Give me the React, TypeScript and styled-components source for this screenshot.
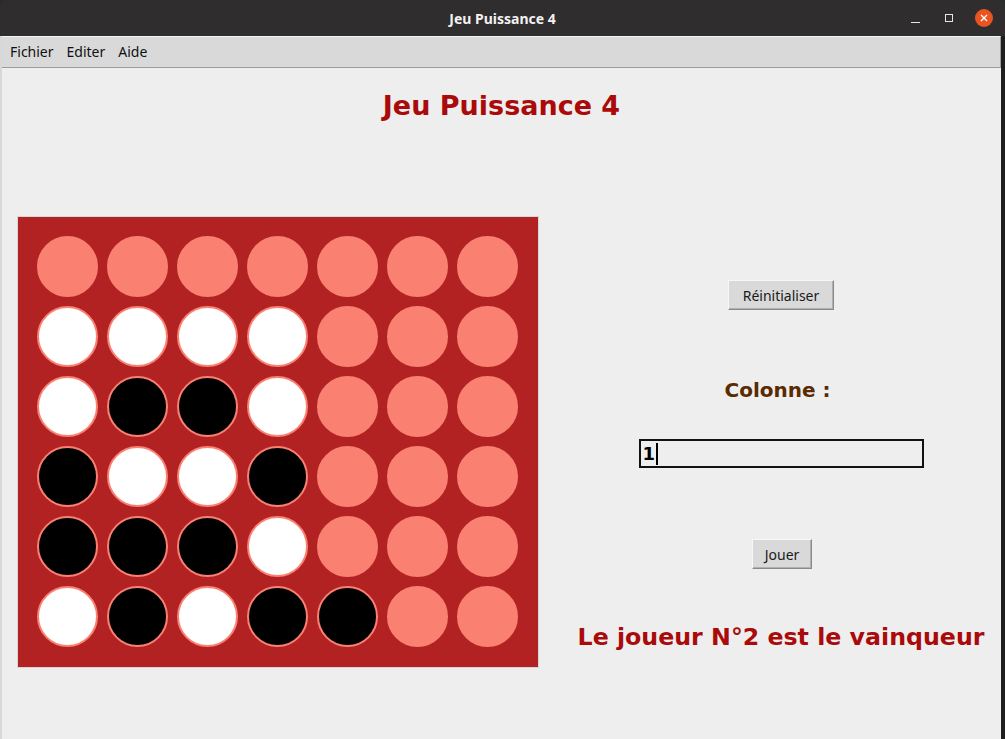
// @ts-nocheck
import React from "react"
import styled, { createGlobalStyle } from "styled-components"

const GlobalStyle = createGlobalStyle`
  html, body {
    margin: 0;
    padding: 0;
    background: #2b2b2b;
  }
  #root {
    width: 1005px;
    height: 739px;
    overflow: hidden;
  }
`

// 6 rangées x 7 colonnes : p = libre, w = joueur 1, b = joueur 2
const board = [
  "ppppppp",
  "wwwwppp",
  "wbbwppp",
  "bwwbppp",
  "bbbwppp",
  "wbwbbpp"
]

const Screen = styled.div`
  display: flex;
  flex-direction: column;
  width: 1005px;
  height: 739px;
`

const TitleBar = styled.div`
  position: relative;
  height: 36px;
  flex-shrink: 0;
  background: #2f2d2d;
  border-radius: 8px 8px 0 0;
  display: flex;
  align-items: center;
  justify-content: center;
  color: #f2f2f2;
  font-family: "Noto Sans", "DejaVu Sans", sans-serif;
  font-weight: 700;
  font-size: 14px;
`

const WindowControls = styled.div`
  position: absolute;
  right: 12px;
  top: 0;
  height: 36px;
  display: flex;
  align-items: center;
  gap: 18px;
`

const Minimize = styled.div`
  width: 9px;
  height: 1px;
  margin-top: 8px;
  margin-right: 7px;
  background: #e6e6e6;
`

const Maximize = styled.div`
  width: 6px;
  height: 6px;
  border: 1px solid #e6e6e6;
  margin-right: 4px;
`

const CloseButton = styled.div`
  width: 18px;
  height: 18px;
  border-radius: 50%;
  background: #e95420;
  display: flex;
  align-items: center;
  justify-content: center;
`

const Body = styled.div`
  flex: 1;
  display: flex;
`

const LeftEdge = styled.div`
  width: 2px;
  background: #d8d8d8;
`

const RightEdge = styled.div`
  width: 4px;
  background: #1e1e1e;
`

const Window = styled.div`
  flex: 1;
  display: flex;
  flex-direction: column;
  background: #eeeeee;
`

const MenuBar = styled.div`
  height: 30px;
  display: flex;
  align-items: center;
  gap: 13px;
  padding-left: 8px;
  background: #d9d9d9;
  border-top: 1px solid #f4f4f4;
  border-bottom: 1px solid #9c9c9c;
  border-right: 1px solid #9c9c9c;
  font-family: "Noto Sans", "DejaVu Sans", sans-serif;
  font-size: 14px;
  color: #111;
`

const MenuItem = styled.span`
  line-height: 30px;
`

const Heading = styled.h1`
  margin: 22px 0 0;
  text-align: center;
  font-family: "DejaVu Sans", sans-serif;
  font-weight: 700;
  font-size: 27px;
  line-height: 32px;
  color: #aa0a0a;
`

const Content = styled.div`
  display: flex;
  margin-top: 94px;
  padding-left: 15px;
`

const Canvas = styled.div`
  box-sizing: content-box;
  width: 501px;
  height: 431px;
  padding: 19px 0 0 19px;
  border: 1px solid #d6d6d6;
  background: #b22222;
  display: grid;
  grid-template-columns: repeat(7, 61px);
  grid-template-rows: repeat(6, 61px);
  gap: 9px;
  align-content: start;
`

const fills = { p: "#fa8072", w: "#ffffff", b: "#000000" }

const Disc = styled.div`
  width: 61px;
  height: 61px;
  box-sizing: border-box;
  border-radius: 50%;
  background: ${(p) => fills[p.$kind]};
  border: 2px solid #fa8072;
`

const Panel = styled.div`
  width: 440px;
  margin-left: 22px;
  display: flex;
  flex-direction: column;
  align-items: center;
`

const TkButton = styled.button`
  height: 30px;
  padding: 0 ${(p) => p.$pad}px;
  margin-top: ${(p) => p.$top}px;
  margin-left: ${(p) => p.$shift || 0}px;
  background: #d9d9d9;
  border: 1px solid;
  border-color: #f7f7f7 #8a8a8a #8a8a8a #f7f7f7;
  box-shadow: inset -1px -1px 0 #b0b0b0;
  font-family: "Noto Sans", "DejaVu Sans", sans-serif;
  font-size: 14px;
  color: #1a1a1a;
`

const Label = styled.div`
  margin-top: 68px;
  margin-right: 7px;
  font-family: "DejaVu Sans", sans-serif;
  font-weight: 700;
  font-size: 20px;
  line-height: 24px;
  color: #5a2a00;
`

const Entry = styled.div`
  margin-top: 37px;
  width: 285px;
  height: 29px;
  box-sizing: border-box;
  border: 2px solid #111;
  background: #eeeeee;
  display: flex;
  align-items: center;
  padding-left: 2px;
  font-family: "DejaVu Sans", sans-serif;
  font-weight: 700;
  font-size: 18px;
  color: #000;
`

const Caret = styled.span`
  width: 2px;
  height: 22px;
  background: #000;
  margin-left: 1px;
`

const Winner = styled.div`
  margin-top: 54px;
  font-family: "DejaVu Sans", sans-serif;
  font-weight: 700;
  font-size: 23.7px;
  line-height: 29px;
  color: #aa0a0a;
  white-space: nowrap;
`

export default function App() {
  return (
    <Screen>
      <GlobalStyle />
      <TitleBar>
        Jeu Puissance 4
        <WindowControls>
          <Minimize />
          <Maximize />
          <CloseButton>
            <svg width="8" height="8" viewBox="0 0 8 8">
              <path d="M1 1L7 7M7 1L1 7" stroke="#fff" strokeWidth="1.4" />
            </svg>
          </CloseButton>
        </WindowControls>
      </TitleBar>
      <Body>
        <LeftEdge />
        <Window>
          <MenuBar>
            <MenuItem>Fichier</MenuItem>
            <MenuItem>Editer</MenuItem>
            <MenuItem>Aide</MenuItem>
          </MenuBar>
          <Heading>Jeu Puissance 4</Heading>
          <Content>
            <Canvas>
              {board.map((row, r) =>
                row.split("").map((c, i) => <Disc key={r + "-" + i} $kind={c} />)
              )}
            </Canvas>
            <Panel>
              <TkButton $top={64} $pad={14}>Réinitialiser</TkButton>
              <Label>Colonne :</Label>
              <Entry>
                1<Caret />
              </Entry>
              <TkButton $top={71} $pad={12} $shift={2}>Jouer</TkButton>
              <Winner>Le joueur N°2 est le vainqueur</Winner>
            </Panel>
          </Content>
        </Window>
        <RightEdge />
      </Body>
    </Screen>
  )
}
